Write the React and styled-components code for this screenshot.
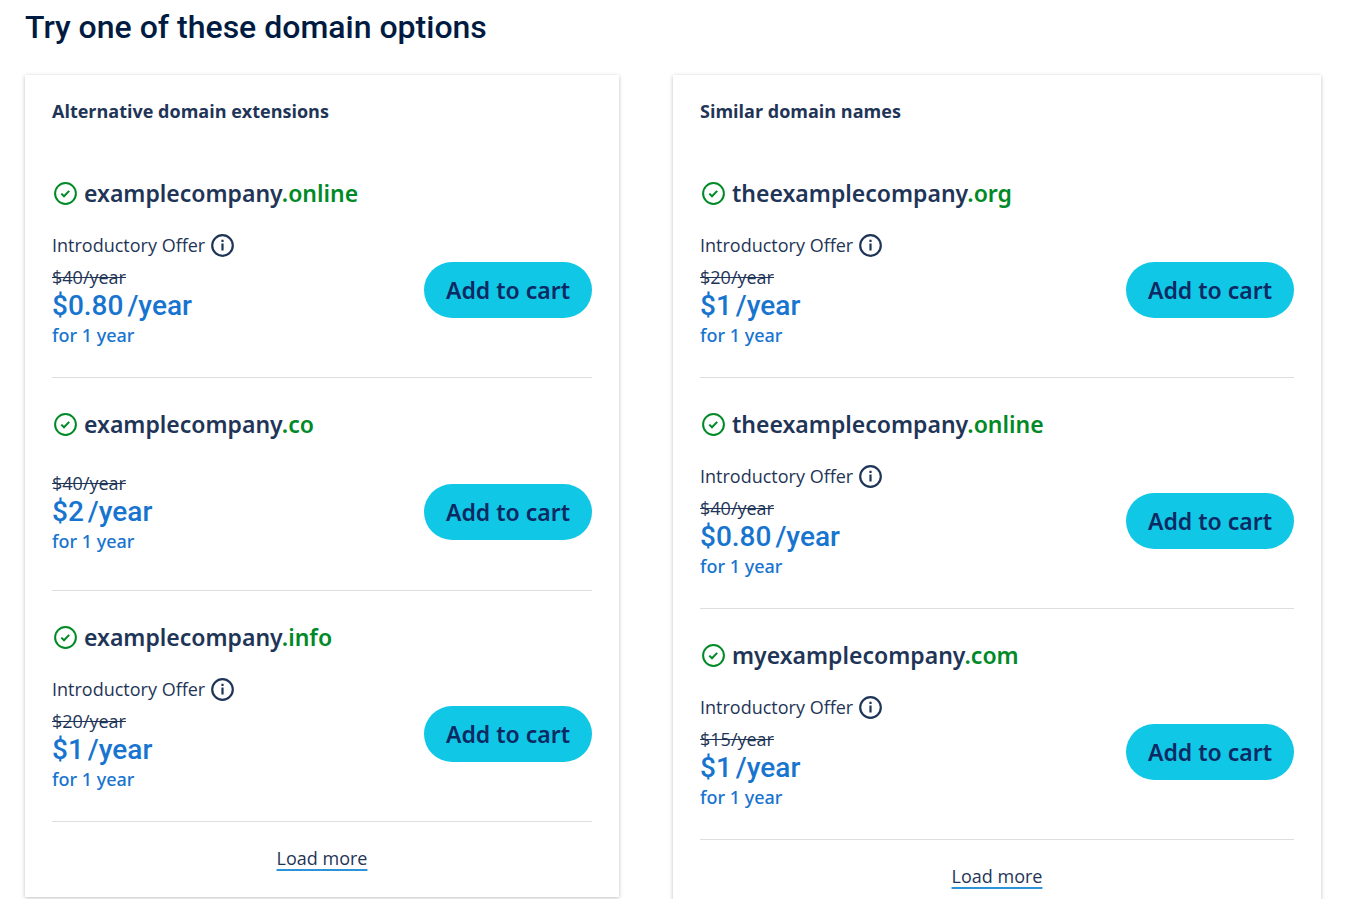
import styled, { createGlobalStyle } from 'styled-components';

const alternatives = [
  { name: 'examplecompany', tld: '.online', oldPrice: '$40', price: '$0.80', intro: true },
  { name: 'examplecompany', tld: '.co', oldPrice: '$40', price: '$2', intro: false },
  { name: 'examplecompany', tld: '.info', oldPrice: '$20', price: '$1', intro: true },
];

const similar = [
  { name: 'theexamplecompany', tld: '.org', oldPrice: '$20', price: '$1', intro: true },
  { name: 'theexamplecompany', tld: '.online', oldPrice: '$40', price: '$0.80', intro: true },
  { name: 'myexamplecompany', tld: '.com', oldPrice: '$15', price: '$1', intro: true },
];

export default function App() {
  return (
    <>
      <GlobalStyle />
      <Page>
        <Heading>Try one of these domain options</Heading>
        <Columns>
          <DomainCard title="Alternative domain extensions" domains={alternatives} />
          <DomainCard title="Similar domain names" domains={similar} />
        </Columns>
      </Page>
    </>
  );
}

function DomainCard({ title, domains }) {
  return (
    <Card>
      <CardTitle>{title}</CardTitle>
      <List>
        {domains.map(domain => (
          <Domain key={domain.name + domain.tld} {...domain} />
        ))}
      </List>
      <CardFooter>
        <LoadMore href="#more">Load more</LoadMore>
      </CardFooter>
    </Card>
  );
}

function Domain({ name, tld, oldPrice, price, intro }) {
  return (
    <Item>
      <Name>
        <CheckIcon />
        <span>
          {name}
          <Tld>{tld}</Tld>
        </span>
      </Name>
      <Offer>
        <div>
          {intro && (
            <Intro>
              Introductory Offer
              <InfoButton type="button" aria-label="About this offer">
                <InfoIcon />
              </InfoButton>
            </Intro>
          )}
          <OldPrice>{oldPrice}/year</OldPrice>
          <Price>
            <span>{price}</span>
            <span>/year</span>
          </Price>
          <Term>for 1 year</Term>
        </div>
        <CartButton type="button">Add to cart</CartButton>
      </Offer>
    </Item>
  );
}

function CheckIcon() {
  return (
    <svg width="26" height="26" viewBox="0 0 26 26" fill="none" stroke="#008a27" strokeWidth="2">
      <circle cx="13.5" cy="13.5" r="10.4" />
      <path d="M9.3 13.6l2.7 2.7 5.2-5.4" />
    </svg>
  );
}

function InfoIcon() {
  return (
    <svg width="24" height="24" viewBox="0 0 24 24" fill="none" stroke="#1f3557" strokeWidth="2.2">
      <circle cx="11.5" cy="12.5" r="10.3" />
      <path d="M11.5 10.6v7M11.5 6.8v2.2" />
    </svg>
  );
}

const GlobalStyle = createGlobalStyle`
  * {
    box-sizing: border-box;
    margin: 0;
    padding: 0;
  }

  body {
    background: #fff;
    color: #1f3557;
    font-family: 'Open Sans', sans-serif;
    font-size: 18px;
    line-height: 26px;
  }
`;

const Page = styled.main`
  padding: 7px 28px 0 25px;
`;

const Heading = styled.h1`
  color: #001b41;
  font-family: Roboto, sans-serif;
  font-size: 32px;
  font-weight: 500;
  line-height: 40px;
  margin-bottom: 28px;
`;

const Columns = styled.div`
  display: grid;
  grid-template-columns: 11fr 12fr;
  align-items: start;
  gap: 54px;
`;

const Card = styled.section`
  padding: 24px 27px 0;
  background: #fff;
  box-shadow: 0 1px 4px rgba(0, 0, 0, 0.25);
`;

const CardTitle = styled.h2`
  font-size: 18px;
  font-weight: 700;
  line-height: 24px;
  margin-bottom: 24px;
`;

const List = styled.ul`
  list-style: none;
`;

const Item = styled.li`
  padding: 30px 0 29px;
  border-bottom: 1px solid #dedede;
`;

const Name = styled.h3`
  display: flex;
  align-items: center;
  gap: 6px;
  font-family: 'Noto Sans', sans-serif;
  font-size: 23px;
  font-weight: 600;
  line-height: 32px;
  margin-bottom: 23px;
`;

const Tld = styled.span`
  color: #008a27;
`;

const Offer = styled.div`
  display: flex;
  align-items: center;
  justify-content: space-between;
  min-height: 98px;
`;

const Intro = styled.p`
  display: flex;
  align-items: center;
  gap: 6px;
  margin-bottom: 6px;
`;

const InfoButton = styled.button`
  display: flex;
  border: none;
  background: none;
  cursor: pointer;
`;

const OldPrice = styled.p`
  text-decoration: line-through;
`;

const Price = styled.p`
  display: flex;
  gap: 4px;
  color: #1774cf;
  font-family: Roboto, sans-serif;
  font-size: 28px;
  font-weight: 500;
  line-height: 32px;
`;

const Term = styled.p`
  color: #1774cf;
  font-family: 'Noto Sans', sans-serif;
  font-weight: 500;
`;

const CartButton = styled.button`
  height: 56px;
  padding: 0 22px;
  border: none;
  border-radius: 28px;
  background: #11c7e6;
  color: #0b2a63;
  font-family: 'Noto Sans', sans-serif;
  font-size: 23px;
  font-weight: 600;
  cursor: pointer;
`;

const CardFooter = styled.div`
  padding: 23px 0 26px;
  text-align: center;
`;

const LoadMore = styled.a`
  color: inherit;
  text-decoration: underline 2px #2c93d8;
  text-underline-offset: 4px;
`;
